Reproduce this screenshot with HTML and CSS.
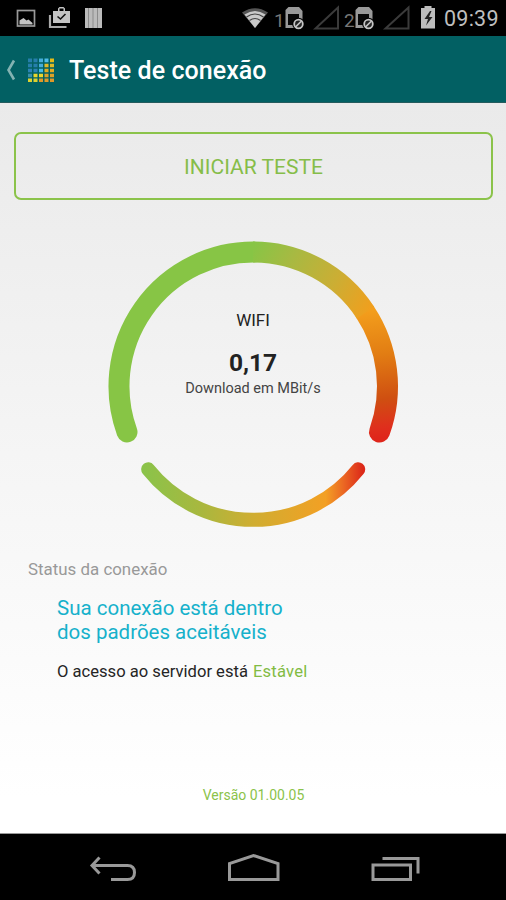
FILE: index.html
```html
<!DOCTYPE html>
<html lang="pt-BR">
<head>
<meta charset="utf-8">
<title>Teste de conexão</title>
<link rel="stylesheet" href="styles.css">
</head>
<body>
<div class="screen">
  <div class="status-bar">
    <svg class="status-left" viewBox="0 0 110 36">
      <rect x="17.5" y="10.5" width="17" height="15.5" fill="none" stroke="#999" stroke-width="1.700"/>
      <path d="M19.500 24.500v-4l4-2.500 3 2.500 2-1 4 3.500v1.500z" fill="#c4c4c4"/>
      <path d="M50 15v12h16.500" fill="none" stroke="#aaa" stroke-width="2.200"/>
      <path d="M53 11h5V8.500l1.500-1.500h4l1.500 1.500V11h5v12H53zM59.500 11h4V8.500h-4z" fill="#c4c4c4" fill-rule="evenodd"/>
      <path d="M57.500 16.500l3 2.500 5-5" fill="none" stroke="#111" stroke-width="1.600"/>
      <path d="M85 8h17v20H85z" fill="#bbb"/>
      <path d="M88.500 8v20M93 8v20M97.500 8v20" stroke="#8b8b8b" stroke-width="1"/>
    </svg>
    <div class="status-right">
      <svg class="status-icons" viewBox="240 0 200 36">
        <path d="M242 12.500Q255 4 268 12.500L255 28z" fill="#555"/>
        <path d="M244.500 14.500Q255 7.500 265.500 14.500L255 28z" fill="#c9c9c9"/>
        <path d="M246.500 17q8.500-6 17 0M249.500 20.500q5.500-4 11 0" fill="none" stroke="#444" stroke-width="1.200"/>
        <text class="sim-number" x="274" y="26.500">1</text>
        <text class="sim-number" x="344" y="26.500">2</text>
        <g id="sim">
          <path d="M288.500 7H299l3.500 4v17h-17V10z" fill="#999"/>
          <path d="M288 14h11v11h-11z" fill="#080808"/>
          <circle cx="298.500" cy="24" r="6.300" fill="#000"/>
          <circle cx="298.500" cy="24" r="4.300" fill="#222" stroke="#c4c4c4" stroke-width="1.800"/>
          <path d="M295.500 27l6-6" stroke="#c4c4c4" stroke-width="1.700"/>
        </g>
        <use href="#sim" x="70"/>
        <path d="M315.500 28.500H338V7.500z" fill="none" stroke="#3b3b3b" stroke-width="2"/>
        <path d="M385.500 28.500H408.500V7.500z" fill="none" stroke="#3b3b3b" stroke-width="2"/>
        <path d="M421 8h3.500V6h7v2h3.500v20.500h-14z" fill="#bdbdbd"/>
        <path d="M430 11l-5.500 8h3.500l-2 6.500 6.500-8.500h-3.500l2.500-6z" fill="#222"/>
      </svg>
      <span class="clock">09:39</span>
    </div>
  </div>

  <header class="app-bar">
    <svg class="back-chevron" viewBox="0 0 12 24"><path d="M9 2.500L3.500 12 9 21.500" fill="none" stroke="#83b3b2" stroke-width="2.600"/></svg>
    <svg class="logo" viewBox="0 0 28 24">
      <g fill="none" stroke-width="4" stroke-dasharray="4 1.500">
        <path d="M0 2.500h10" stroke="#267fac"/><path d="M11 2.500h4" stroke="#45addb"/><path d="M16.500 2.500h4" stroke="#4cbbe8"/><path d="M22 2.500h4" stroke="#e4bb18"/>
        <path d="M0 7.500h10" stroke="#267fac"/><path d="M11 7.500h4" stroke="#45addb"/><path d="M16.500 7.500h10" stroke="#dfb928"/>
        <path d="M0 12.500h10" stroke="#2c83b7"/><path d="M11 12.500h4" stroke="#45bbe5"/><path d="M16.500 12.500h10" stroke="#e2ac20"/>
        <path d="M0 17.500h4" stroke="#3990ae"/><path d="M5.500 17.500h10" stroke="#ead52c"/><path d="M16.500 17.500h10" stroke="#dda128"/>
        <path d="M0 22h10" stroke="#ddd130"/><path d="M11 22h15" stroke="#df9928"/>
      </g>
      <path d="M0 5h27M0 10h27M0 15h27M0 20h27" stroke="#046163" stroke-width="1.200"/>
    </svg>
    <h1 class="title">Teste de conexão</h1>
  </header>

  <main class="content">
    <button class="start-button"><span class="start-label">INICIAR TESTE</span></button>

    <section class="gauge">
      <svg class="gauge-rings" viewBox="103 236 300 300">
        <defs>
          <linearGradient id="warm" gradientUnits="userSpaceOnUse" x1="250" y1="251" x2="370" y2="317">
            <stop offset="0" stop-color="#87c545"/><stop offset=".3" stop-color="#a8b942"/><stop offset=".65" stop-color="#cbae34"/><stop offset="1" stop-color="#f39e1c"/>
          </linearGradient>
          <linearGradient id="hot" gradientUnits="userSpaceOnUse" x1="365" y1="311" x2="379" y2="438">
            <stop offset="0" stop-color="#f39e1c"/><stop offset=".35" stop-color="#e27d13"/><stop offset=".7" stop-color="#cf4f11"/><stop offset=".92" stop-color="#df2f1d"/><stop offset="1" stop-color="#df261b"/>
          </linearGradient>
          <linearGradient id="lower" gradientUnits="userSpaceOnUse" x1="144" y1="469" x2="363" y2="469">
            <stop offset="0" stop-color="#8bc34a"/><stop offset=".25" stop-color="#a7b83f"/><stop offset=".5" stop-color="#d0ad31"/><stop offset=".83" stop-color="#f3a024"/><stop offset=".91" stop-color="#eb6823"/><stop offset="1" stop-color="#dc2819"/>
          </linearGradient>
        </defs>
        <g fill="none" stroke-width="21">
          <path d="M127 432A134.300 134.300 0 0 1 253.300 252" stroke="#87c545" stroke-linecap="round"/>
          <path d="M365 312A134.300 134.300 0 0 1 379.500 432" stroke="url(#hot)" stroke-linecap="round"/>
          <path d="M253 252A134.300 134.300 0 0 1 365.500 312.700" stroke="url(#warm)"/>
          <path d="M148.200 469.300A134.300 134.300 0 0 0 358.200 469.300" stroke="url(#lower)" stroke-width="14" stroke-linecap="round"/>
        </g>
      </svg>
      <div class="reading">
        <span class="network">WIFI</span>
        <strong class="speed">0,17</strong>
        <span class="unit">Download em MBit/s</span>
      </div>
    </section>

    <section class="status">
      <h2 class="status-heading">Status da conexão</h2>
      <p class="verdict">Sua conexão está dentro<br>dos padrões aceitáveis</p>
      <p class="server"><span>O acesso ao servidor está</span><span class="stable">Estável</span></p>
    </section>

    <footer class="version">Versão 01.00.05</footer>
  </main>

  <nav class="nav-bar">
    <svg class="nav-icons" viewBox="0 834 506 66" fill="none" stroke="#999" stroke-width="3">
      <path d="M99.500 857.500L92 865.500l7.500 8M92 865.500h35.500q7 0 7 7t-7 7H111"/>
      <path d="M229.500 879.500v-16L253.500 855.500l24.500 8v16z"/>
      <path d="M373 865h37.500v14.500H373zM382.500 858.500h35.500v15"/>
    </svg>
  </nav>
</div>
</body>
</html>
```

FILE: styles.css
```css
* { box-sizing: border-box; }
body {
  margin: 0;
  font-family: Roboto, "Liberation Sans", sans-serif;
}
h1, h2, p { margin: 0; font-weight: 400; }
svg { display: block; flex: none; }
.screen {
  width: 506px;
  height: 900px;
  display: flex;
  flex-direction: column;
  overflow: hidden;
  background: #000;
}
.status-bar {
  height: 36px;
  flex: none;
  display: flex;
  justify-content: space-between;
}
.status-left { width: 110px; height: 36px; }
.status-right { display: flex; width: 266px; }
.status-icons { width: 200px; height: 36px; }
.sim-number { font-size: 19px; fill: #777; }
.clock {
  margin-left: 4px;
  line-height: 38px;
  font-size: 21.500px;
  color: #bebebe;
  letter-spacing: .25px;
}
.app-bar {
  height: 67px;
  flex: none;
  display: flex;
  align-items: center;
  background: #026063;
  border-bottom: 1px solid #245b5d;
  white-space: nowrap;
}
.back-chevron { width: 12px; height: 24px; margin: 2px 0 0 5px; }
.logo { width: 28px; height: 24px; margin: 2px 0 0 11px; }
.title {
  margin-left: 13px;
  padding-top: 4px;
  font-size: 25px;
  font-weight: 500;
  line-height: 32px;
  letter-spacing: .05px;
  color: #fff;
}
.content {
  height: 731px;
  flex: none;
  display: flex;
  flex-direction: column;
  padding: 28px 13px 0 14px;
  background: linear-gradient(#eaeaea, #f5f5f5 48%, #fff 95%);
  border-bottom: 1px solid #999;
}
.start-button {
  height: 68px;
  flex: none;
  margin-top: 1px;
  padding: 2px 0 0;
  border: 2px solid #8bc34a;
  border-radius: 7px;
  background: transparent;
  font: 400 21px/32px Roboto, sans-serif;
  color: #86bd49;
}
.gauge {
  display: grid;
  width: 300px;
  height: 300px;
  flex: none;
  margin: 36px 0 0 89px;
}
.gauge-rings, .reading { grid-area: 1 / 1; }
.gauge-rings { width: 300px; height: 300px; }
.reading {
  display: flex;
  flex-direction: column;
  align-items: center;
  padding-top: 72px;
  color: #222;
}
.network { font-size: 17px; line-height: 24px; }
.speed { margin-top: 15px; font-size: 24.500px; line-height: 32px; font-weight: 700; }
.unit { font-size: 14.500px; line-height: 20px; color: #444; }
.status { margin: 21px 0 0 14px; white-space: nowrap; }
.status-heading { font-size: 16.900px; line-height: 24px; color: #999; }
.verdict {
  margin: 15px 0 0 29px;
  font-size: 20.500px;
  line-height: 24px;
  color: #16b1cb;
}
.server {
  display: flex;
  gap: 5px;
  margin: 16px 0 0 29px;
  font-size: 16.600px;
  line-height: 24px;
  color: #252525;
}
.stable { color: #82bb43; letter-spacing: .2px; }
.version {
  margin-top: 101px;
  text-align: center;
  font-size: 14px;
  line-height: 20px;
  color: #8bc34a;
}
.nav-bar { height: 66px; flex: none; }
.nav-icons { width: 506px; height: 66px; }
```
